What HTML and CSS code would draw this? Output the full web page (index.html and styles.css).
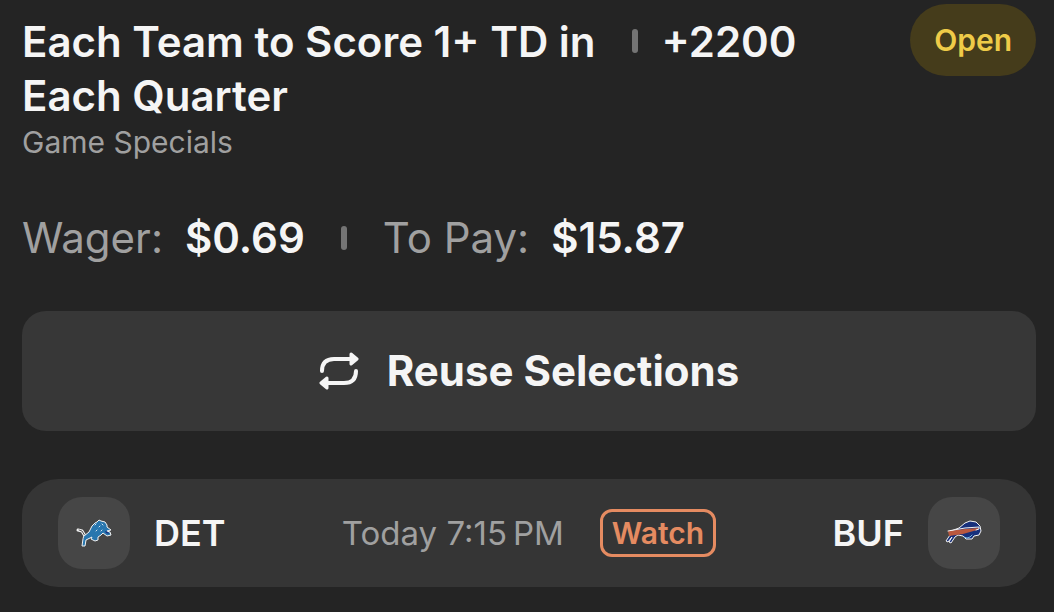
FILE: index.html
```html
<!DOCTYPE html>
<html lang="en">
<head>
  <meta charset="UTF-8">
  <title>My Bets</title>
  <meta name="viewport" content="width=device-width,initial-scale=1">
  <link rel="stylesheet" href="styles.css">
</head>
<body>
  <main class="bet">
    <header class="bet-header">
      <div class="bet-info">
        <div class="bet-title">
          <h1>Each Team to Score 1+ TD in<br>Each Quarter</h1>
          <span class="divider"></span>
          <span class="odds">+2200</span>
        </div>
        <p class="market">Game Specials</p>
      </div>
      <span class="status">Open</span>
    </header>

    <div class="stakes">
      <p class="stake"><span class="label">Wager:</span><strong>$0.69</strong></p>
      <span class="divider"></span>
      <p class="stake"><span class="label">To Pay:</span><strong>$15.87</strong></p>
    </div>

    <button type="button" class="reuse">
      <svg width="40" height="40" viewBox="0 0 40 40" fill="none" stroke="currentColor" stroke-width="4" stroke-linecap="round" stroke-linejoin="round" aria-hidden="true">
        <path d="M3 20C3 12 7 8 15 8h20"/>
        <path d="M32 3l6 5-6 5z" fill="currentColor" stroke-width="3"/>
        <path d="M37 20c0 8-4 12-12 12H5"/>
        <path d="M8 27l-6 5 6 5z" fill="currentColor" stroke-width="3"/>
      </svg>
      Reuse Selections
    </button>

    <section class="game">
      <div class="team">
        <span class="logo">
          <!-- Detroit -->
          <svg width="44" height="40" viewBox="0 0 44 40" stroke-linejoin="round" stroke-linecap="round" aria-hidden="true">
            <path d="M6 17l4 1 3 5" fill="none" stroke="#f2f2f2" stroke-width="3"/>
            <path d="M7 17l3 1 3 5" fill="none" stroke="#555" stroke-width="1"/>
            <path d="M12 23l5-4 3-6 3-3 2-1 2-2 2 1 4 1 2 3 0 2 4 3-4 1 3 1 1 3-4 1-4-3-2 2-3 2 0 3-3 1-4-2 1-2-6 3-1 6h-3l1-7z" fill="#2876ae" stroke="#f2f2f2" stroke-width="1"/>
            <path d="M23 12l1-1m3 3l1-1m2-2l1 1m-7 6l1-1m4 1l1-1" fill="none" stroke="#d7e6f0" stroke-width="1"/>
            <path d="M33 18l3 1 1 2-3-1z" fill="#20307e"/>
          </svg>
        </span>
        <span class="team-name">DET</span>
      </div>
      <div class="schedule">
        <time>Today 7:15&#8201;PM</time>
        <button type="button" class="watch">Watch</button>
      </div>
      <div class="team away">
        <span class="team-name">BUF</span>
        <span class="logo">
          <!-- Buffalo -->
          <svg width="44" height="40" viewBox="0 0 44 40" stroke-linejoin="round" stroke-linecap="round" aria-hidden="true">
            <path d="M9 18l8-3 6-5 5-2 6 1 4 4 1 5-2 4-5 1-2 3-6 0-3-3 -5-1-3 2-4 6-2-1 3-5-4 5-2-1 4-6 6-3z" fill="#17307c" stroke="#f2f2f2" stroke-width="1"/>
            <path d="M6 18l17-2 14-1-2 2-14 4-14 2z" fill="#b9583f"/>
            <path d="M6 18l17-3 14-1v2l-3 1" fill="none" stroke="#f2f2f2" stroke-width="1"/>
            <path d="M22 24l3 1 3-1 2-2" fill="none" stroke="#79b5df" stroke-width="1"/>
          </svg>
        </span>
      </div>
    </section>
  </main>
</body>
</html>
```
FILE: styles.css
```css
* { box-sizing: border-box; }
body { margin: 0; background: #242424; color: #f5f5f5; font-family: Inter, "Liberation Sans", sans-serif; }
h1, p { margin: 0; }
button { font-family: inherit; cursor: pointer; }

.bet { padding: 4px 18px 24px 22px; }
.bet-header { display: flex; justify-content: space-between; align-items: flex-start; }
.bet-info { padding-top: 11px; }
.bet-title { display: flex; font-size: 42px; line-height: 54px; font-weight: 600; }
.bet-title h1 { font-size: inherit; font-weight: inherit; }
.bet-title .divider { margin: 14px 24px 0 36px; }
.divider { flex: none; width: 6px; height: 24px; border-radius: 3px; background: #747474; }
.market { margin-top: 1px; font-size: 30px; line-height: 36px; color: #a0a0a0; }
.status { padding: 18px 24px; border-radius: 36px; background: #453c1b; color: #efcb48; font-size: 30px; line-height: 36px; font-weight: 600; }

.stakes { display: flex; align-items: center; gap: 36px; margin-top: 51px; font-size: 42px; line-height: 54px; }
.stake { display: flex; gap: 22px; }
.stake .label { color: #a0a0a0; }
.stake strong { font-weight: 600; }

.reuse { display: flex; justify-content: center; align-items: center; gap: 28px; width: 100%; margin-top: 46px; padding: 33px; border: none; border-radius: 24px; background: #373737; color: #f5f5f5; font-size: 42px; line-height: 54px; font-weight: 700; }

.game { display: grid; grid-template-columns: 1fr auto 1fr; align-items: center; margin-top: 48px; padding: 18px 36px; border-radius: 36px; background: #353535; }
.team { display: flex; align-items: center; gap: 24px; }
.away { justify-content: flex-end; }
.team-name { font-size: 36px; font-weight: 600; }
.logo { display: flex; justify-content: center; align-items: center; width: 72px; height: 72px; border-radius: 24px; background: #464646; }
.schedule { display: flex; align-items: center; gap: 36px; color: #a0a0a0; font-size: 33px; }
.watch { padding: 3px 9px; border: 3px solid #e58b61; border-radius: 12px; background: transparent; color: #e58b61; font-size: 30px; line-height: 36px; font-weight: 600; }
```
